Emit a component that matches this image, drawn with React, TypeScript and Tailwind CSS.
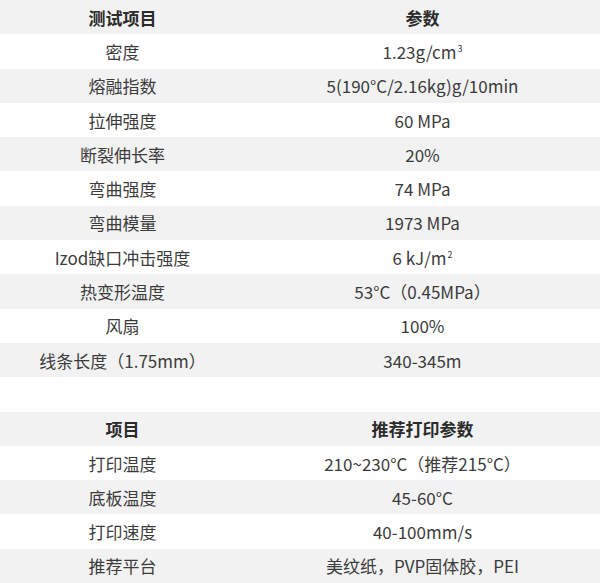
const SPECS: [React.ReactNode, React.ReactNode][] = [
  ['密度', <>1.23g/cm<sup className="text-[9px] -top-[7px] ml-px">3</sup></>],
  ['熔融指数', '5(190°C/2.16kg)g/10min'],
  ['拉伸强度', '60 MPa'],
  ['断裂伸长率', '20%'],
  ['弯曲强度', '74 MPa'],
  ['弯曲模量', '1973 MPa'],
  ['Izod缺口冲击强度', <>6 kJ/m<sup className="text-[9px] -top-[7px] ml-px">2</sup></>],
  ['热变形温度', '53°C（0.45MPa）'],
  ['风扇', '100%'],
  ['线条长度（1.75mm）', '340-345m'],
];

const PRINT: [string, string][] = [
  ['打印温度', '210~230°C（推荐215°C）'],
  ['底板温度', '45-60°C'],
  ['打印速度', '40-100mm/s'],
  ['推荐平台', '美纹纸，PVP固体胶，PEI'],
];

function Row({ left, right, gray, head }: { left: React.ReactNode; right: React.ReactNode; gray?: boolean; head?: boolean }) {
  return (
    <div
      className={`grid grid-cols-[245px_1fr] h-[34.3px] items-center text-center ${gray ? 'bg-[#f2f2f2]' : 'bg-white'} ${head ? 'font-bold text-[#2b2b2b]' : 'text-[#3c3c3c]'}`}
    >
      <div className="leading-none">{left}</div>
      <div className="leading-none">{right}</div>
    </div>
  );
}

export default function App() {
  return (
    <div
      className="w-[600px] h-[583px] bg-white text-[17px] overflow-hidden"
      style={{ fontFamily: '"Noto Sans CJK SC", "Noto Sans", sans-serif' }}
    >
      <Row left="测试项目" right="参数" gray head />
      {SPECS.map(([l, r], i) => (
        <Row key={i} left={l} right={r} gray={i % 2 === 1} />
      ))}
      <div className="h-[34.3px]" />
      <Row left="项目" right="推荐打印参数" gray head />
      {PRINT.map(([l, r], i) => (
        <Row key={l} left={l} right={r} gray={i % 2 === 1} />
      ))}
    </div>
  );
}
